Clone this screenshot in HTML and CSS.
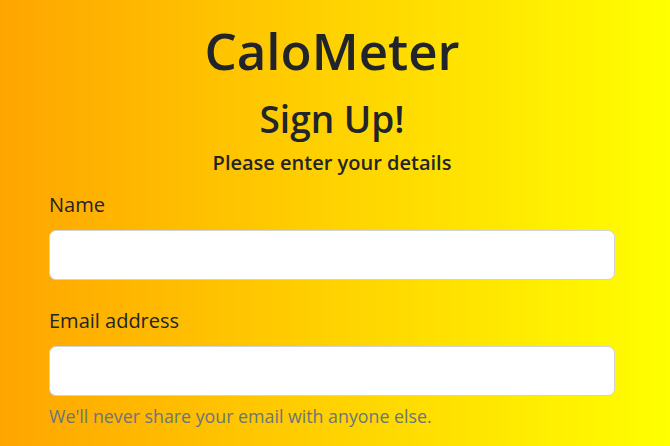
FILE: index.html
```html
<!DOCTYPE html>
<html lang="en">
<head>
<meta charset="utf-8">
<title>CaloMeter - Sign Up</title>
<link rel="stylesheet" href="styles.css">
</head>
<body>
<main class="page">
  <h1 class="brand">CaloMeter</h1>
  <h2 class="title">Sign Up!</h2>
  <p class="subtitle">Please enter your details</p>
  <form class="form">
    <div class="field">
      <label class="label" for="name">Name</label>
      <input class="input" id="name" type="text">
    </div>
    <div class="field">
      <label class="label" for="email">Email address</label>
      <input class="input" id="email" type="email">
      <div class="help">We'll never share your email with anyone else.</div>
    </div>
  </form>
</main>
</body>
</html>
```
FILE: styles.css
```css
html, body {
  margin: 0;
  padding: 0;
}
body {
  min-height: 100vh;
  background: linear-gradient(to right, #ffa500, #ffff00);
  font-family: "Open Sans", "Noto Sans", sans-serif;
  color: #212529;
  overflow: hidden;
}
.page {
  padding: 15px 55px 0 49px;
  display: flex;
  flex-direction: column;
}
.brand {
  margin: 0;
  text-align: center;
  font-size: 51px;
  font-weight: 600;
  line-height: 70px;
}
.title {
  margin: 2px 0 0;
  text-align: center;
  font-size: 37px;
  font-weight: 600;
  line-height: 63px;
}
.subtitle {
  margin: 1px 0 0;
  text-align: center;
  font-size: 20px;
  font-weight: 600;
  line-height: 24px;
}
.form {
  display: flex;
  flex-direction: column;
  gap: 26px;
  margin-top: 15px;
}
.field {
  display: flex;
  flex-direction: column;
}
.label {
  font-size: 20px;
  line-height: 30px;
  margin-bottom: 10px;
}
.input {
  box-sizing: border-box;
  height: 50px;
  border: 1px solid #ced4da;
  border-radius: 7px;
  background: #fff;
  font: inherit;
  padding: 0 16px;
}
.help {
  margin-top: 8px;
  font-size: 17.8px;
  line-height: 24px;
  color: #6c757d;
}
```
